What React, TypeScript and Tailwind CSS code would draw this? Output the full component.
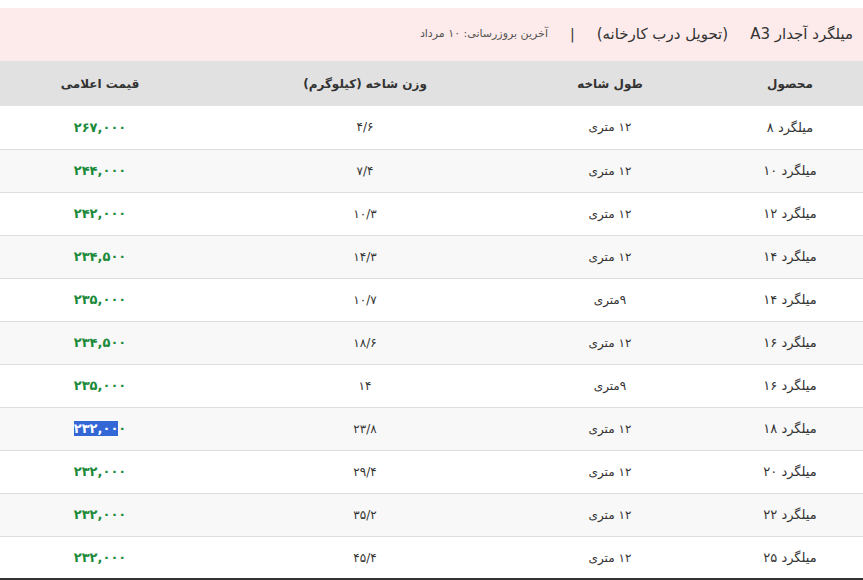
const rows = [
  { name: 'میلگرد ۸', len: '۱۲ متری', weight: '۴/۶', price: '۲۶۷,۰۰۰' },
  { name: 'میلگرد ۱۰', len: '۱۲ متری', weight: '۷/۴', price: '۲۴۴,۰۰۰' },
  { name: 'میلگرد ۱۲', len: '۱۲ متری', weight: '۱۰/۳', price: '۲۴۲,۰۰۰' },
  { name: 'میلگرد ۱۴', len: '۱۲ متری', weight: '۱۴/۳', price: '۲۳۴,۵۰۰' },
  { name: 'میلگرد ۱۴', len: '۹متری', weight: '۱۰/۷', price: '۲۳۵,۰۰۰' },
  { name: 'میلگرد ۱۶', len: '۱۲ متری', weight: '۱۸/۶', price: '۲۳۴,۵۰۰' },
  { name: 'میلگرد ۱۶', len: '۹متری', weight: '۱۴', price: '۲۳۵,۰۰۰' },
  { name: 'میلگرد ۱۸', len: '۱۲ متری', weight: '۲۳/۸', price: '۲۳۲,۰۰۰', selected: true },
  { name: 'میلگرد ۲۰', len: '۱۲ متری', weight: '۲۹/۴', price: '۲۳۲,۰۰۰' },
  { name: 'میلگرد ۲۲', len: '۱۲ متری', weight: '۳۵/۲', price: '۲۳۲,۰۰۰' },
  { name: 'میلگرد ۲۵', len: '۱۲ متری', weight: '۴۵/۴', price: '۲۳۲,۰۰۰' },
];

export default function App() {
  return (
    <div dir="rtl" className="w-[863px] h-[580px] overflow-hidden bg-white pt-2 text-[#333] font-['DejaVu_Sans',sans-serif]">
      <div className="h-[53px] bg-[#fdeaea] flex items-center gap-[22px] pr-[10px]">
        <span className="text-[15px]">میلگرد آجدار A3</span>
        <span className="text-[15px]">(تحویل درب کارخانه)</span>
        <span className="text-[14px]">|</span>
        <span className="text-[11px] text-[#555]">آخرین بروزرسانی: ۱۰ مرداد</span>
      </div>
      <table className="w-full table-fixed border-collapse">
        <colgroup>
          <col className="w-[146px]" />
          <col className="w-[214px]" />
          <col className="w-[276px]" />
          <col />
        </colgroup>
        <thead>
          <tr className="h-[45px] bg-[#e1e1e1] text-[12px] font-bold">
            <th className="text-center">محصول</th>
            <th className="text-center">طول شاخه</th>
            <th className="text-center">وزن شاخه (کیلوگرم)</th>
            <th className="text-center pl-0 pr-[27px]">قیمت اعلامی</th>
          </tr>
        </thead>
        <tbody>
          {rows.map((r, i) => (
            <tr
              key={i}
              className={`h-[43px] border-b text-[12px] ${i === rows.length - 1 ? 'border-transparent' : 'border-[#dddddd]'} ${i % 2 === 1 ? 'bg-[#f8f8f8]' : 'bg-white'}`}
            >
              <td className="text-center text-[13px]">{r.name}</td>
              <td className="text-center">{r.len}</td>
              <td className="text-center">{r.weight}</td>
              <td className="text-center pr-[27px] text-[13px] font-bold text-[#1b8a3a]">
                {r.selected ? (
                  <span dir="ltr">
                    <span className="bg-[#3367d6] text-white">۲۳۲,۰۰</span>۰
                  </span>
                ) : (
                  r.price
                )}
              </td>
            </tr>
          ))}
        </tbody>
      </table>
      <div className="h-[2px] bg-[#333] -mt-[2px]" />
    </div>
  );
}
